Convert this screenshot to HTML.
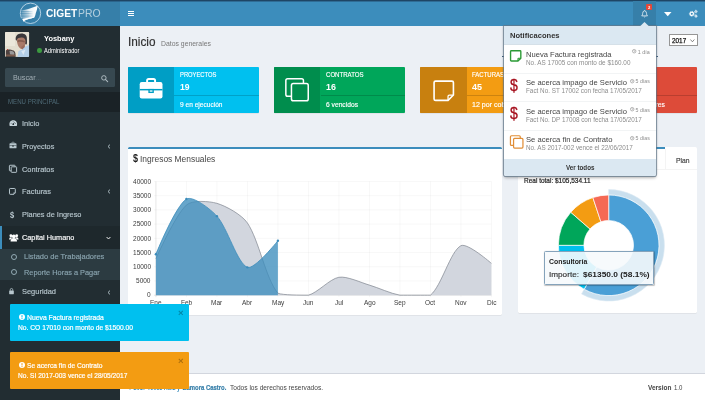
<!DOCTYPE html>
<html><head><meta charset="utf-8"><title>CIGETPRO</title>
<style>
html,body{margin:0;padding:0;}
body{width:705px;height:400px;overflow:hidden;position:relative;background:#ecf0f5;font-family:"Liberation Sans",sans-serif;}
span{display:block}
svg{position:absolute;overflow:visible}
</style></head><body>
<div style="position:absolute;left:0px;top:0px;width:705px;height:26.4px;background:#3c8dbc;"></div>
<div style="position:absolute;left:0px;top:0px;width:120px;height:26.4px;background:#367fa9;"></div>
<div style="position:absolute;left:0px;top:0px;width:705px;height:1px;background:#1e4565;"></div>
<div style="position:absolute;left:0px;top:1px;width:705px;height:0.7px;background:rgba(30,69,101,0.45);"></div>
<div style="position:absolute;left:632.8px;top:1px;width:22.8px;height:25.4px;background:#367fa9;"></div>
<svg style="left:20px;top:3px" width="21" height="21" viewBox="0 0 21 21">
<defs><linearGradient id="lg" x1="0" x2="1" y1="0" y2="0"><stop offset="0" stop-color="#fff" stop-opacity="0.3"/><stop offset="0.5" stop-color="#fff" stop-opacity="0.9"/><stop offset="1" stop-color="#fff" stop-opacity="1"/></linearGradient>
<linearGradient id="lg2" x1="0" x2="1" y1="0" y2="0"><stop offset="0" stop-color="#367fa9" stop-opacity="1"/><stop offset="0.6" stop-color="#367fa9" stop-opacity="0.7"/><stop offset="1" stop-color="#367fa9" stop-opacity="0"/></linearGradient></defs>
<circle cx="10.5" cy="10.3" r="10.2" fill="none" stroke="#cfe3f1" stroke-width="0.8"/>
<path d="M1.5 7.6 C6 6.8 12 5 17.6 2.7 C17.4 5.5 16.6 8 15.8 10 C15.4 12 15 13.5 14.2 14.6 C12 15.4 10 15.6 8 16.2 C6 17 4.5 17.6 3 18.6 C3.2 17.4 3 16.4 2.6 15.6 L1 14.5 Z" fill="url(#lg)"/>
<path d="M0.8 8.7 H13 M0.8 10.4 H13.5 M0.8 12.1 H13.5 M0.8 13.8 H13 M1 15.4 H9" stroke="url(#lg2)" stroke-width="0.7" fill="none"/>
<path d="M3 18.6 C3.2 17.4 3 16.6 2.8 15.8 C6 14.8 11 14.6 14.4 13.8 L14.2 14.6 C12 15.4 10 15.6 8 16.2 C6 17 4.5 17.6 3 18.6 Z" fill="#fff"/>
</svg>
<span style="position:absolute;top:4px;line-height:20px;font-size:10.2px;color:#fff;white-space:nowrap;font-weight:bold;left:46.20px;transform-origin:0 50%;transform:scaleX(1.0010);">CIGET</span>
<span style="position:absolute;top:4px;line-height:20px;font-size:10.2px;color:rgba(255,255,255,0.62);white-space:nowrap;left:77.60px;transform-origin:0 50%;transform:scaleX(1.0225);">PRO</span>
<div style="position:absolute;left:128.2px;top:10.6px;width:6.3px;height:1.1px;background:#fff;"></div>
<div style="position:absolute;left:128.2px;top:12.7px;width:6.3px;height:1.1px;background:#fff;"></div>
<div style="position:absolute;left:128.2px;top:14.8px;width:6.3px;height:1.1px;background:#fff;"></div>
<div style="position:absolute;left:0px;top:26.4px;width:120px;height:373.6px;background:#222d32;"></div>
<svg style="left:4.9px;top:31.9px" width="24.1" height="24.9" viewBox="0 0 24.1 24.9">
<defs><clipPath id="ac"><rect x="0" y="0" width="24.1" height="24.9" rx="1.2"/></clipPath><filter id="bl" x="-10%" y="-10%" width="120%" height="120%"><feGaussianBlur stdDeviation="0.55"/></filter></defs>
<g clip-path="url(#ac)">
<rect width="24.1" height="24.9" fill="#e3decf"/>
<g filter="url(#bl)">
<rect x="-2" y="-2" width="12" height="16" fill="#ebe7da"/>
<rect x="20" y="-2" width="6" height="14" fill="#e6e1d3"/>
<path d="M10.8 8 C10.2 4 12.5 1.6 16.2 1.5 C20 1.4 22.2 3.6 21.9 7 C22 9.5 22.2 11.5 21.6 12.6 L19.5 12 L12.5 9 Z" fill="#3a393b"/>
<path d="M11.8 8 C12.3 6 15 5.4 17 5.6 C19.4 5.8 20.6 7.2 20.6 9.5 C20.6 12.8 19.2 15.8 16.6 17 C14.2 16.4 12.2 13 11.8 8 Z" fill="#a97a68"/>
<path d="M12.4 8.6 C14 7.8 17.5 8 19.8 9 L19.6 10.4 C17.5 9.6 14.5 9.6 12.6 10.2 Z" fill="#7d5648" opacity="0.8"/>
<path d="M16 15 L19.6 12.6 L20 16 L17.6 18.6 Z" fill="#9a6b5a"/>
<path d="M12.3 26 L13.5 19 L17.2 17.4 L20.5 14.6 L24.6 12.8 L25 26 Z" fill="#b3cfe8"/>
<path d="M16.2 19 L18.4 23 L20.6 17.5 L18.2 18.4 Z" fill="#dbe8f4"/>
<path d="M0.8 18.4 C2.5 16.6 6 17.6 8.6 18.6 C10.4 19.6 10.8 22 10.6 26 L0.8 26 Z" fill="#4d433f"/>
<path d="M4.5 19 C6.5 18.2 9 19.4 9.4 21.4 L9 23.4 L5 22.6 Z" fill="#9a9999"/>
<path d="M1 22.5 H10 V24.2 H1 Z" fill="#7a5a4c"/>
<circle cx="2.5" cy="17.6" r="0.7" fill="#c0392b"/>
</g></g></svg>
<span style="position:absolute;top:29px;line-height:20px;font-size:7.4px;color:#fff;white-space:nowrap;font-weight:bold;left:44.00px;transform-origin:0 50%;transform:scaleX(1.0068);">Yosbany</span>
<div style="position:absolute;left:37px;top:48.2px;width:4.6px;height:4.6px;border-radius:50%;background:#3c9a40"></div>
<span style="position:absolute;top:41px;line-height:20px;font-size:6.8px;color:#fff;white-space:nowrap;left:44.00px;transform-origin:0 50%;transform:scaleX(0.8463);">Administrador</span>
<div style="position:absolute;left:5px;top:68px;width:110px;height:19px;background:#374850;border-radius:1.5px"></div>
<span style="position:absolute;top:68px;line-height:20px;font-size:7.4px;color:#a3afb5;white-space:nowrap;left:12.80px;transform-origin:0 50%;transform:scaleX(0.9813);">Buscar</span>
<span style="position:absolute;top:68px;line-height:20px;font-size:7.4px;color:#5c6c74;white-space:nowrap;left:35.80px;transform-origin:0 50%;transform:scaleX(0.8107);">...</span>
<svg style="left:101px;top:74.6px" width="7.4" height="7.4" viewBox="0 0 8 8"><circle cx="3.1" cy="3.1" r="2.4" fill="none" stroke="#b0bcc2" stroke-width="1.05"/><path d="M5 5 L7.2 7.2" stroke="#b0bcc2" stroke-width="1.15" stroke-linecap="round"/></svg>
<div style="position:absolute;left:0px;top:92px;width:120px;height:19.5px;background:#1a2226;"></div>
<span style="position:absolute;top:92px;line-height:20px;font-size:6.5px;color:#4e6a76;white-space:nowrap;left:7.80px;transform-origin:0 50%;transform:scaleX(0.9402);">MENU PRINCIPAL</span>
<div style="position:absolute;left:0px;top:226px;width:120px;height:23.5px;background:#1e282c;"></div>
<div style="position:absolute;left:0px;top:226px;width:2px;height:23.5px;background:#3c8dbc;"></div>
<div style="position:absolute;left:0px;top:249.3px;width:120px;height:31px;background:#2c3b41;"></div>
<span style="position:absolute;top:114px;line-height:20px;font-size:7.8px;color:#b8c7ce;white-space:nowrap;left:21.80px;transform-origin:0 50%;transform:scaleX(0.9501);-webkit-text-stroke:0.15px #b8c7ce;">Inicio</span>
<span style="position:absolute;top:137px;line-height:20px;font-size:7.8px;color:#b8c7ce;white-space:nowrap;left:21.80px;transform-origin:0 50%;transform:scaleX(0.9313);-webkit-text-stroke:0.15px #b8c7ce;">Proyectos</span>
<span style="position:absolute;top:160px;line-height:20px;font-size:7.8px;color:#b8c7ce;white-space:nowrap;left:21.80px;transform-origin:0 50%;transform:scaleX(0.9522);-webkit-text-stroke:0.15px #b8c7ce;">Contratos</span>
<span style="position:absolute;top:182px;line-height:20px;font-size:7.8px;color:#b8c7ce;white-space:nowrap;left:21.80px;transform-origin:0 50%;transform:scaleX(0.9557);-webkit-text-stroke:0.15px #b8c7ce;">Facturas</span>
<span style="position:absolute;top:205px;line-height:20px;font-size:7.8px;color:#b8c7ce;white-space:nowrap;left:21.80px;transform-origin:0 50%;transform:scaleX(0.9463);-webkit-text-stroke:0.15px #b8c7ce;">Planes de Ingreso</span>
<span style="position:absolute;top:282px;line-height:20px;font-size:7.8px;color:#b8c7ce;white-space:nowrap;left:21.80px;transform-origin:0 50%;transform:scaleX(0.9561);-webkit-text-stroke:0.15px #b8c7ce;">Seguridad</span>
<span style="position:absolute;top:228px;line-height:20px;font-size:7.8px;color:#fff;white-space:nowrap;left:21.80px;transform-origin:0 50%;transform:scaleX(0.9369);-webkit-text-stroke:0.15px #fff;">Capital Humano</span>
<span style="position:absolute;top:247px;line-height:20px;font-size:7.8px;color:#8aa4af;white-space:nowrap;left:23.70px;transform-origin:0 50%;transform:scaleX(0.9607);-webkit-text-stroke:0.15px #8aa4af;">Listado de Trabajadores</span>
<span style="position:absolute;top:263px;line-height:20px;font-size:7.8px;color:#8aa4af;white-space:nowrap;left:23.70px;transform-origin:0 50%;transform:scaleX(0.9450);-webkit-text-stroke:0.15px #8aa4af;">Reporte Horas a Pagar</span>
<svg style="left:107px;top:143.7px" width="4" height="5" viewBox="0 0 4 5"><path d="M3 0.6 L1 2.5 L3 4.4" fill="none" stroke="#b8c7ce" stroke-width="0.9"/></svg>
<svg style="left:107px;top:189.2px" width="4" height="5" viewBox="0 0 4 5"><path d="M3 0.6 L1 2.5 L3 4.4" fill="none" stroke="#b8c7ce" stroke-width="0.9"/></svg>
<svg style="left:107px;top:289.5px" width="4" height="5" viewBox="0 0 4 5"><path d="M3 0.6 L1 2.5 L3 4.4" fill="none" stroke="#b8c7ce" stroke-width="0.9"/></svg>
<svg style="left:105.8px;top:236px" width="5" height="4" viewBox="0 0 5 4"><path d="M0.6 1 L2.5 3 L4.4 1" fill="none" stroke="#fff" stroke-width="0.9"/></svg>
<svg style="left:8.8px;top:120.1px" width="8.5" height="6.1" viewBox="0 0 9 6.8"><path d="M0.5 6.6 C-0.6 2.6 1.6 0.2 4.5 0.2 C7.4 0.2 9.6 2.6 8.5 6.6 Z" fill="#c6d3d9"/><circle cx="4.5" cy="4.7" r="0.95" fill="#222d32"/><path d="M4.5 4.7 L5.9 2.5" stroke="#222d32" stroke-width="0.7"/><circle cx="2.1" cy="3.6" r="0.45" fill="#222d32"/><circle cx="4.3" cy="1.8" r="0.45" fill="#222d32"/><circle cx="6.9" cy="3.8" r="0.45" fill="#222d32"/></svg>
<svg style="left:9px;top:142.4px" width="8" height="6.3" viewBox="0 0 20 18">
<path d="M6.5 4 V2.2 Q6.5 0.8 7.9 0.8 H12.1 Q13.5 0.8 13.5 2.2 V4" fill="none" stroke="#b8c7ce" stroke-width="1.7"/>
<rect x="0" y="3.6" width="20" height="14.4" rx="1.8" fill="#b8c7ce"/>
<rect x="0" y="9.6" width="20" height="1.3" fill="#222d32"/>
<rect x="7.6" y="9.6" width="4.8" height="3.6" fill="#222d32"/>
<rect x="8.8" y="10.9" width="2.4" height="1.1" fill="#b8c7ce"/>
</svg>
<svg style="left:9px;top:165px" width="8" height="7.6" viewBox="0 0 24 23.6">
<path d="M6.4 18.2 H2.6 Q0.8 18.2 0.8 16.4 V2.6 Q0.8 0.8 2.6 0.8 H16.6 Q18.4 0.8 18.4 2.6 V5.6" fill="none" stroke="#b8c7ce" stroke-width="3.0"/>
<rect x="6.4" y="5.6" width="16.8" height="17.2" rx="1.8" fill="none" stroke="#b8c7ce" stroke-width="3.0"/>
</svg>
<svg style="left:9px;top:188px" width="6.8" height="6.8" viewBox="0 0 6.8 6.8"><path d="M4.9 6.3 H1.2 Q0.5 6.3 0.5 5.6 V1.2 Q0.5 0.5 1.2 0.5 H5.6 Q6.3 0.5 6.3 1.2 V4.9 Z" fill="none" stroke="#b8c7ce" stroke-width="1"/><path d="M4.7 6.3 V4.7 H6.3" fill="none" stroke="#b8c7ce" stroke-width="0.6"/></svg>
<span style="position:absolute;top:205px;line-height:20px;font-size:8.6px;color:#b8c7ce;white-space:nowrap;font-weight:bold;left:9.50px;transform-origin:0 50%;transform:scaleX(0.8781);">$</span>
<svg style="left:8.6px;top:233.6px" width="9.6" height="7.6" viewBox="0 0 20 16"><circle cx="10" cy="5" r="4.2" fill="#fff"/><path d="M3.2 16 Q3.2 8.6 10 8.6 Q16.8 8.6 16.8 16 Z" fill="#fff"/><circle cx="3.9" cy="3.6" r="3" fill="#fff"/><circle cx="16.1" cy="3.6" r="3" fill="#fff"/><path d="M0 11.6 Q0 6.4 4.4 6.6 L7 8.4 Q4 10 3.6 11.6 Z" fill="#fff"/><path d="M20 11.6 Q20 6.4 15.6 6.6 L13 8.4 Q16 10 16.4 11.6 Z" fill="#fff"/></svg>
<svg style="left:9.1px;top:288.3px" width="5" height="6.2" viewBox="0 0 12 16"><path d="M2.8 7 V4.6 Q2.8 1.2 6 1.2 Q9.2 1.2 9.2 4.6 V7" fill="none" stroke="#b8c7ce" stroke-width="2"/><rect x="0" y="6.6" width="12" height="9.4" rx="1.2" fill="#b8c7ce"/></svg>
<div style="position:absolute;left:10.9px;top:253.9px;width:4.2px;height:4.2px;border:1px solid #93abb5;border-radius:50%"></div>
<div style="position:absolute;left:10.9px;top:268.9px;width:4.2px;height:4.2px;border:1px solid #93abb5;border-radius:50%"></div>
<span style="position:absolute;top:32px;line-height:20px;font-size:12.6px;color:#333;white-space:nowrap;left:128.30px;transform-origin:0 50%;transform:scaleX(0.9349);-webkit-text-stroke:0.2px #333;">Inicio</span>
<span style="position:absolute;top:34px;line-height:20px;font-size:7.6px;color:#777;white-space:nowrap;left:161.00px;transform-origin:0 50%;transform:scaleX(0.9034);">Datos generales</span>
<div style="position:absolute;left:669.1px;top:34.4px;width:27.2px;height:9.8px;background:#fff;border:0.8px solid #959595;border-radius:0.5px"></div>
<span style="position:absolute;top:31px;line-height:20px;font-size:6.9px;color:#111;white-space:nowrap;left:671.80px;transform-origin:0 50%;transform:scaleX(0.9251);-webkit-text-stroke:0.25px #111;">2017</span>
<svg style="left:690.4px;top:38.8px" width="4.8" height="3.4" viewBox="0 0 4.8 3.4"><path d="M0.4 0.5 L2.4 2.8 L4.4 0.5" fill="none" stroke="#555" stroke-width="0.7"/></svg>
<div style="position:absolute;left:128px;top:66.6px;width:130.7px;height:46.6px;background:#00c0ef;border-radius:1px;box-shadow:0 0.5px 0.5px rgba(0,0,0,0.1)"></div>
<div style="position:absolute;left:128px;top:66.6px;width:46.3px;height:46.6px;background:#009ec5;border-radius:1px 0 0 1px"></div>
<div style="position:absolute;left:174.3px;top:94.9px;width:84.4px;height:0.7px;background:rgba(0,0,0,0.16);"></div>
<span style="position:absolute;top:65px;line-height:20px;font-size:7.3px;color:#fff;white-space:nowrap;left:179.80px;transform-origin:0 50%;transform:scaleX(0.7964);-webkit-text-stroke:0.15px #fff;">PROYECTOS</span>
<span style="position:absolute;top:77px;line-height:20px;font-size:9.2px;color:#fff;white-space:nowrap;font-weight:bold;left:179.80px;transform-origin:0 50%;transform:scaleX(0.9381);">19</span>
<span style="position:absolute;top:95px;line-height:20px;font-size:7.3px;color:#fff;white-space:nowrap;left:179.80px;transform-origin:0 50%;transform:scaleX(0.9027);-webkit-text-stroke:0.15px #fff;">9 en ejecución</span>
<div style="position:absolute;left:274.2px;top:66.6px;width:130.7px;height:46.6px;background:#00a65a;border-radius:1px;box-shadow:0 0.5px 0.5px rgba(0,0,0,0.1)"></div>
<div style="position:absolute;left:274.2px;top:66.6px;width:46.3px;height:46.6px;background:#008d4d;border-radius:1px 0 0 1px"></div>
<div style="position:absolute;left:320.5px;top:94.9px;width:84.4px;height:0.7px;background:rgba(0,0,0,0.16);"></div>
<span style="position:absolute;top:65px;line-height:20px;font-size:7.3px;color:#fff;white-space:nowrap;left:326.00px;transform-origin:0 50%;transform:scaleX(0.8327);-webkit-text-stroke:0.15px #fff;">CONTRATOS</span>
<span style="position:absolute;top:77px;line-height:20px;font-size:9.2px;color:#fff;white-space:nowrap;font-weight:bold;left:326.00px;transform-origin:0 50%;transform:scaleX(0.9674);">16</span>
<span style="position:absolute;top:95px;line-height:20px;font-size:7.3px;color:#fff;white-space:nowrap;left:326.00px;transform-origin:0 50%;transform:scaleX(0.9169);-webkit-text-stroke:0.15px #fff;">6 vencidos</span>
<div style="position:absolute;left:420.4px;top:66.6px;width:130.7px;height:46.6px;background:#f39c12;border-radius:1px;box-shadow:0 0.5px 0.5px rgba(0,0,0,0.1)"></div>
<div style="position:absolute;left:420.4px;top:66.6px;width:46.3px;height:46.6px;background:#c8800f;border-radius:1px 0 0 1px"></div>
<div style="position:absolute;left:466.7px;top:94.9px;width:84.4px;height:0.7px;background:rgba(0,0,0,0.16);"></div>
<span style="position:absolute;top:65px;line-height:20px;font-size:7.3px;color:#fff;white-space:nowrap;left:472.20px;transform-origin:0 50%;transform:scaleX(0.8218);-webkit-text-stroke:0.15px #fff;">FACTURAS</span>
<span style="position:absolute;top:77px;line-height:20px;font-size:9.2px;color:#fff;white-space:nowrap;font-weight:bold;left:472.20px;transform-origin:0 50%;transform:scaleX(0.9772);">45</span>
<span style="position:absolute;top:95px;line-height:20px;font-size:7.3px;color:#fff;white-space:nowrap;left:472.20px;transform-origin:0 50%;transform:scaleX(0.9673);-webkit-text-stroke:0.15px #fff;">12 por cobrar</span>
<div style="position:absolute;left:566.6px;top:66.6px;width:130.7px;height:46.6px;background:#dd4b39;border-radius:1px;box-shadow:0 0.5px 0.5px rgba(0,0,0,0.1)"></div>
<div style="position:absolute;left:566.6px;top:66.6px;width:46.3px;height:46.6px;background:#b73e2f;border-radius:1px 0 0 1px"></div>
<div style="position:absolute;left:612.9px;top:94.9px;width:84.4px;height:0.7px;background:rgba(0,0,0,0.16);"></div>
<span style="position:absolute;top:65px;line-height:20px;font-size:7.3px;color:#fff;white-space:nowrap;left:618.40px;transform-origin:0 50%;transform:scaleX(0.8475);-webkit-text-stroke:0.15px #fff;">HORAS</span>
<span style="position:absolute;top:77px;line-height:20px;font-size:9.2px;color:#fff;white-space:nowrap;font-weight:bold;left:618.40px;transform-origin:0 50%;transform:scaleX(0.9772);">28</span>
<span style="position:absolute;top:95px;line-height:20px;font-size:7.3px;color:#fff;white-space:nowrap;left:618.40px;transform-origin:0 50%;transform:scaleX(0.9265);-webkit-text-stroke:0.15px #fff;">12 trabajadores</span>
<svg style="left:139px;top:78.1px" width="24.2" height="20.5" viewBox="0 0 20 18">
<path d="M6.5 4 V2.2 Q6.5 0.8 7.9 0.8 H12.1 Q13.5 0.8 13.5 2.2 V4" fill="none" stroke="#fff" stroke-width="1.7"/>
<rect x="0" y="3.6" width="20" height="14.4" rx="1.8" fill="#fff"/>
<rect x="0" y="9.6" width="20" height="1.3" fill="#009ec5"/>
<rect x="7.6" y="9.6" width="4.8" height="3.6" fill="#009ec5"/>
<rect x="8.8" y="10.9" width="2.4" height="1.1" fill="#fff"/>
</svg>
<svg style="left:285.3px;top:77.9px" width="24.1" height="23.6" viewBox="0 0 24 23.6">
<path d="M6.4 18.2 H2.6 Q0.8 18.2 0.8 16.4 V2.6 Q0.8 0.8 2.6 0.8 H16.6 Q18.4 0.8 18.4 2.6 V5.6" fill="none" stroke="#fff" stroke-width="1.5"/>
<rect x="6.4" y="5.6" width="16.8" height="17.2" rx="1.8" fill="none" stroke="#fff" stroke-width="1.5"/>
</svg>
<svg style="left:433px;top:79.5px" width="21.5" height="21.5" viewBox="0 0 20 20">
<path d="M14 19 H2.4 Q1 19 1 17.6 V2.4 Q1 1 2.4 1 H17.6 Q19 1 19 2.4 V14 Z" fill="none" stroke="#fff" stroke-width="1.5" stroke-linejoin="round"/>
<path d="M14 19 V15.2 Q14 14 15.2 14 H19" fill="none" stroke="#fff" stroke-width="1.2000000000000002"/>
</svg>
<div style="position:absolute;left:128px;top:147px;width:374.3px;height:168px;background:#fff;border-radius:1.5px;box-shadow:0 0.5px 0.5px rgba(0,0,0,0.1)"></div>
<div style="position:absolute;left:128px;top:147px;width:374.3px;height:1.5px;background:#3c8dbc;border-radius:1.5px 1.5px 0 0"></div>
<span style="position:absolute;top:149px;line-height:20px;font-size:10.2px;color:#222;white-space:nowrap;font-weight:bold;left:133.00px;transform-origin:0 50%;transform:scaleX(0.8814);">$</span>
<span style="position:absolute;top:149px;line-height:20px;font-size:9.4px;color:#444;white-space:nowrap;left:140.00px;transform-origin:0 50%;transform:scaleX(0.8975);">Ingresos Mensuales</span>
<svg style="left:0;top:0" width="705" height="400" viewBox="0 0 705 400">
<line x1="153.9" x2="491.4" y1="295.20" y2="295.20" stroke="rgba(0,0,0,0.06)" stroke-width="0.6"/>
<line x1="153.9" x2="491.4" y1="280.98" y2="280.98" stroke="rgba(0,0,0,0.06)" stroke-width="0.6"/>
<line x1="153.9" x2="491.4" y1="266.76" y2="266.76" stroke="rgba(0,0,0,0.06)" stroke-width="0.6"/>
<line x1="153.9" x2="491.4" y1="252.54" y2="252.54" stroke="rgba(0,0,0,0.06)" stroke-width="0.6"/>
<line x1="153.9" x2="491.4" y1="238.32" y2="238.32" stroke="rgba(0,0,0,0.06)" stroke-width="0.6"/>
<line x1="153.9" x2="491.4" y1="224.10" y2="224.10" stroke="rgba(0,0,0,0.06)" stroke-width="0.6"/>
<line x1="153.9" x2="491.4" y1="209.88" y2="209.88" stroke="rgba(0,0,0,0.06)" stroke-width="0.6"/>
<line x1="153.9" x2="491.4" y1="195.66" y2="195.66" stroke="rgba(0,0,0,0.06)" stroke-width="0.6"/>
<line x1="153.9" x2="491.4" y1="181.44" y2="181.44" stroke="rgba(0,0,0,0.06)" stroke-width="0.6"/>
<line x1="155.90" x2="155.90" y1="181.44" y2="297.2" stroke="rgba(0,0,0,0.06)" stroke-width="0.6"/>
<line x1="186.40" x2="186.40" y1="181.44" y2="297.2" stroke="rgba(0,0,0,0.06)" stroke-width="0.6"/>
<line x1="216.90" x2="216.90" y1="181.44" y2="297.2" stroke="rgba(0,0,0,0.06)" stroke-width="0.6"/>
<line x1="247.40" x2="247.40" y1="181.44" y2="297.2" stroke="rgba(0,0,0,0.06)" stroke-width="0.6"/>
<line x1="277.90" x2="277.90" y1="181.44" y2="297.2" stroke="rgba(0,0,0,0.06)" stroke-width="0.6"/>
<line x1="308.40" x2="308.40" y1="181.44" y2="297.2" stroke="rgba(0,0,0,0.06)" stroke-width="0.6"/>
<line x1="338.90" x2="338.90" y1="181.44" y2="297.2" stroke="rgba(0,0,0,0.06)" stroke-width="0.6"/>
<line x1="369.40" x2="369.40" y1="181.44" y2="297.2" stroke="rgba(0,0,0,0.06)" stroke-width="0.6"/>
<line x1="399.90" x2="399.90" y1="181.44" y2="297.2" stroke="rgba(0,0,0,0.06)" stroke-width="0.6"/>
<line x1="430.40" x2="430.40" y1="181.44" y2="297.2" stroke="rgba(0,0,0,0.06)" stroke-width="0.6"/>
<line x1="460.90" x2="460.90" y1="181.44" y2="297.2" stroke="rgba(0,0,0,0.06)" stroke-width="0.6"/>
<line x1="491.40" x2="491.40" y1="181.44" y2="297.2" stroke="rgba(0,0,0,0.06)" stroke-width="0.6"/>
<line x1="155.9" x2="155.9" y1="181.44" y2="297.2" stroke="rgba(0,0,0,0.12)" stroke-width="0.6"/>
<line x1="153.9" x2="491.4" y1="295.2" y2="295.2" stroke="rgba(0,0,0,0.12)" stroke-width="0.6"/>
<path d="M155.90 258.80 C155.90 258.80 174.97 215.44 186.40 205.05 C192.05 199.91 209.09 201.05 216.90 203.34 C226.17 206.06 241.91 214.88 247.40 222.96 C258.99 240.04 265.69 278.75 277.90 293.21 C282.77 295.20 300.48 295.20 308.40 295.20 C317.56 292.81 329.86 278.78 338.90 277.28 C346.94 275.95 360.95 282.62 369.40 285.10 C378.03 287.64 391.14 293.75 399.90 295.20 C408.22 295.20 424.52 295.20 430.40 295.20 C441.60 286.11 450.27 251.27 460.90 245.71 C467.35 242.35 491.40 263.35 491.40 263.35 L491.40 295.2 L155.9 295.2 Z" fill="#d2d6de"/>
<path d="M155.90 258.80 C155.90 258.80 174.97 215.44 186.40 205.05 C192.05 199.91 209.09 201.05 216.90 203.34 C226.17 206.06 241.91 214.88 247.40 222.96 C258.99 240.04 265.69 278.75 277.90 293.21 C282.77 295.20 300.48 295.20 308.40 295.20 C317.56 292.81 329.86 278.78 338.90 277.28 C346.94 275.95 360.95 282.62 369.40 285.10 C378.03 287.64 391.14 293.75 399.90 295.20 C408.22 295.20 424.52 295.20 430.40 295.20 C441.60 286.11 450.27 251.27 460.90 245.71 C467.35 242.35 491.40 263.35 491.40 263.35" fill="none" stroke="#7f858f" stroke-width="0.7"/>
<path d="M155.90 254.25 C155.90 254.25 175.41 205.94 186.40 199.07 C192.49 195.27 210.59 209.07 216.90 216.14 C227.67 228.18 237.23 263.23 247.40 267.33 C254.31 270.11 277.90 240.74 277.90 240.74 L277.90 295.2 L155.9 295.2 Z" fill="rgba(60,141,188,0.78)"/>
<path d="M155.90 254.25 C155.90 254.25 175.41 205.94 186.40 199.07 C192.49 195.27 210.59 209.07 216.90 216.14 C227.67 228.18 237.23 263.23 247.40 267.33 C254.31 270.11 277.90 240.74 277.90 240.74" fill="none" stroke="#3b8bba" stroke-width="0.8"/>
<circle cx="155.90" cy="254.25" r="1.2" fill="#3b8bba"/>
<circle cx="186.40" cy="199.07" r="1.2" fill="#3b8bba"/>
<circle cx="216.90" cy="216.14" r="1.2" fill="#3b8bba"/>
<circle cx="247.40" cy="267.33" r="1.2" fill="#3b8bba"/>
<circle cx="277.90" cy="240.74" r="1.2" fill="#3b8bba"/>
</svg>
<span style="position:absolute;top:285px;line-height:20px;font-size:6.5px;color:#3a3a3a;white-space:nowrap;right:554.20px;transform-origin:100% 50%;transform:scaleX(0.9990);">0</span>
<span style="position:absolute;top:271px;line-height:20px;font-size:6.5px;color:#3a3a3a;white-space:nowrap;right:554.20px;transform-origin:100% 50%;transform:scaleX(0.9990);">5000</span>
<span style="position:absolute;top:257px;line-height:20px;font-size:6.5px;color:#3a3a3a;white-space:nowrap;right:554.20px;transform-origin:100% 50%;transform:scaleX(0.9990);">10000</span>
<span style="position:absolute;top:243px;line-height:20px;font-size:6.5px;color:#3a3a3a;white-space:nowrap;right:554.20px;transform-origin:100% 50%;transform:scaleX(0.9990);">15000</span>
<span style="position:absolute;top:229px;line-height:20px;font-size:6.5px;color:#3a3a3a;white-space:nowrap;right:554.20px;transform-origin:100% 50%;transform:scaleX(0.9990);">20000</span>
<span style="position:absolute;top:214px;line-height:20px;font-size:6.5px;color:#3a3a3a;white-space:nowrap;right:554.20px;transform-origin:100% 50%;transform:scaleX(0.9990);">25000</span>
<span style="position:absolute;top:200px;line-height:20px;font-size:6.5px;color:#3a3a3a;white-space:nowrap;right:554.20px;transform-origin:100% 50%;transform:scaleX(0.9990);">30000</span>
<span style="position:absolute;top:186px;line-height:20px;font-size:6.5px;color:#3a3a3a;white-space:nowrap;right:554.20px;transform-origin:100% 50%;transform:scaleX(0.9990);">35000</span>
<span style="position:absolute;top:172px;line-height:20px;font-size:6.5px;color:#3a3a3a;white-space:nowrap;right:554.20px;transform-origin:100% 50%;transform:scaleX(0.9990);">40000</span>
<span style="position:absolute;top:293px;line-height:20px;font-size:6.5px;color:#3a3a3a;white-space:nowrap;left:150.12px;transform-origin:0 50%;transform:scaleX(0.9990);">Ene</span>
<span style="position:absolute;top:293px;line-height:20px;font-size:6.5px;color:#3a3a3a;white-space:nowrap;left:180.80px;transform-origin:0 50%;transform:scaleX(0.9990);">Feb</span>
<span style="position:absolute;top:293px;line-height:20px;font-size:6.5px;color:#3a3a3a;white-space:nowrap;left:211.30px;transform-origin:0 50%;transform:scaleX(0.9990);">Mar</span>
<span style="position:absolute;top:293px;line-height:20px;font-size:6.5px;color:#3a3a3a;white-space:nowrap;left:242.34px;transform-origin:0 50%;transform:scaleX(0.9990);">Abr</span>
<span style="position:absolute;top:293px;line-height:20px;font-size:6.5px;color:#3a3a3a;white-space:nowrap;left:271.76px;transform-origin:0 50%;transform:scaleX(0.9990);">May</span>
<span style="position:absolute;top:293px;line-height:20px;font-size:6.5px;color:#3a3a3a;white-space:nowrap;left:303.16px;transform-origin:0 50%;transform:scaleX(0.9990);">Jun</span>
<span style="position:absolute;top:293px;line-height:20px;font-size:6.5px;color:#3a3a3a;white-space:nowrap;left:334.75px;transform-origin:0 50%;transform:scaleX(0.9990);">Jul</span>
<span style="position:absolute;top:293px;line-height:20px;font-size:6.5px;color:#3a3a3a;white-space:nowrap;left:363.62px;transform-origin:0 50%;transform:scaleX(0.9990);">Ago</span>
<span style="position:absolute;top:293px;line-height:20px;font-size:6.5px;color:#3a3a3a;white-space:nowrap;left:394.12px;transform-origin:0 50%;transform:scaleX(0.9990);">Sep</span>
<span style="position:absolute;top:293px;line-height:20px;font-size:6.5px;color:#3a3a3a;white-space:nowrap;left:425.34px;transform-origin:0 50%;transform:scaleX(0.9990);">Oct</span>
<span style="position:absolute;top:293px;line-height:20px;font-size:6.5px;color:#3a3a3a;white-space:nowrap;left:455.12px;transform-origin:0 50%;transform:scaleX(0.9990);">Nov</span>
<span style="position:absolute;top:293px;line-height:20px;font-size:6.5px;color:#3a3a3a;white-space:nowrap;left:486.71px;transform-origin:0 50%;transform:scaleX(0.9990);">Dic</span>
<div style="position:absolute;left:517.7px;top:147px;width:179.8px;height:166.3px;background:#fff;border-radius:1.5px;box-shadow:0 0.5px 0.5px rgba(0,0,0,0.1)"></div>
<div style="position:absolute;left:517.7px;top:147px;width:147.1px;height:1.5px;background:#3c8dbc;border-radius:1.5px 0 0 0"></div>
<div style="position:absolute;left:517.7px;top:169.3px;width:179.8px;height:0.6px;background:#f4f4f4;"></div>
<div style="position:absolute;left:664.5px;top:148.5px;width:0.6px;height:21px;background:#f4f4f4;"></div>
<span style="position:absolute;top:151px;line-height:20px;font-size:7.4px;color:#3a3a3a;white-space:nowrap;left:676.00px;transform-origin:0 50%;transform:scaleX(0.9182);-webkit-text-stroke:0.15px #3a3a3a;">Plan</span>
<span style="position:absolute;top:171px;line-height:20px;font-size:6.8px;color:#222;white-space:nowrap;left:523.70px;transform-origin:0 50%;transform:scaleX(0.9539);-webkit-text-stroke:0.2px #222;">Real total: $105,534.11</span>
<svg style="left:0;top:0" width="705" height="400" viewBox="0 0 705 400">
<path d="M608.70 189.60 A55.7 55.7 0 1 1 581.56 293.94 L584.19 289.23 A50.3 50.3 0 1 0 608.70 195.00 Z" fill="#c9dfee" stroke="#dce9f3" stroke-width="0.6"/>
<path d="M608.70 195.00 A50.3 50.3 0 1 1 584.19 289.23 L596.62 266.96 A24.8 24.8 0 1 0 608.70 220.50 Z" fill="#4a9fd6" stroke="#fff" stroke-width="0.7"/>
<path d="M584.19 289.23 A50.3 50.3 0 0 1 558.40 245.30 L583.90 245.30 A24.8 24.8 0 0 0 596.62 266.96 Z" fill="#00c0ef" stroke="#fff" stroke-width="0.7"/>
<path d="M558.40 245.30 A50.3 50.3 0 0 1 570.76 212.27 L589.99 229.02 A24.8 24.8 0 0 0 583.90 245.30 Z" fill="#00a65a" stroke="#fff" stroke-width="0.7"/>
<path d="M570.76 212.27 A50.3 50.3 0 0 1 592.86 197.56 L600.89 221.76 A24.8 24.8 0 0 0 589.99 229.02 Z" fill="#f39c12" stroke="#fff" stroke-width="0.7"/>
<path d="M592.86 197.56 A50.3 50.3 0 0 1 608.70 195.00 L608.70 220.50 A24.8 24.8 0 0 0 600.89 221.76 Z" fill="#f56954" stroke="#fff" stroke-width="0.7"/>
</svg>
<div style="position:absolute;left:543.8px;top:251px;width:109.8px;height:34px;background:rgba(246,249,252,0.9);border:0.9px solid #85a3bb;border-radius:1.5px;box-sizing:border-box;box-shadow:0.3px 0.6px 1px rgba(0,0,0,0.25)"></div>
<span style="position:absolute;top:252px;line-height:20px;font-size:7px;color:#222;white-space:nowrap;font-weight:bold;left:548.80px;transform-origin:0 50%;transform:scaleX(0.9848);">Consultoría</span>
<span style="position:absolute;top:265px;line-height:20px;font-size:7.6px;color:#333;white-space:nowrap;left:548.80px;transform-origin:0 50%;transform:scaleX(1.0762);-webkit-text-stroke:0.15px #333;">Importe:</span>
<span style="position:absolute;top:265px;line-height:20px;font-size:7.6px;color:#222;white-space:nowrap;font-weight:bold;left:582.50px;transform-origin:0 50%;transform:scaleX(1.1039);">$61350.0 (58.1%)</span>
<div style="position:absolute;left:120px;top:373px;width:585px;height:27px;background:#fff;border-top:0.6px solid #d2d6de"></div>
<span style="position:absolute;top:378px;line-height:20px;font-size:7px;color:#3c8dbc;white-space:nowrap;font-weight:bold;left:128.00px;transform-origin:0 50%;transform:scaleX(0.7866);">© 2017 Tellez Ruiz y</span>
<span style="position:absolute;top:378px;line-height:20px;font-size:7px;color:#367fa9;white-space:nowrap;font-weight:bold;right:478.30px;transform-origin:100% 50%;transform:scaleX(0.8472);-webkit-text-stroke:0.2px #367fa9;">Zamora Castro.</span>
<span style="position:absolute;top:378px;line-height:20px;font-size:7px;color:#444;white-space:nowrap;left:230.20px;transform-origin:0 50%;transform:scaleX(0.9410);">Todos los derechos reservados.</span>
<span style="position:absolute;top:378px;line-height:20px;font-size:6.6px;color:#444;white-space:nowrap;font-weight:bold;left:647.80px;transform-origin:0 50%;transform:scaleX(0.9855);">Version</span>
<span style="position:absolute;top:378px;line-height:20px;font-size:6.8px;color:#444;white-space:nowrap;left:674.00px;transform-origin:0 50%;transform:scaleX(0.8886);">1.0</span>
<svg style="left:640.9px;top:9.8px" width="7.2" height="7.6" viewBox="0 0 14 16"><path d="M7 1.6 Q2.9 2.2 2.9 7.2 Q2.9 10.6 1 12.4 H13 Q11.1 10.6 11.1 7.2 Q11.1 2.2 7 1.6 Z" fill="none" stroke="#fff" stroke-width="1.5" stroke-linejoin="round"/><path d="M5.4 13.6 Q7 16 8.6 13.6" fill="none" stroke="#fff" stroke-width="1.3"/><path d="M7 0.3 V1.6" stroke="#fff" stroke-width="1.4"/></svg>
<div style="position:absolute;left:646.2px;top:4px;width:5.5px;height:5.7px;background:#e4483a;border-radius:1px"></div>
<span style="position:absolute;top:-2px;line-height:20px;font-size:4.2px;color:#fff;white-space:nowrap;font-weight:bold;left:647.90px;transform-origin:0 50%;transform:scaleX(0.9990);">2</span>
<svg style="left:663.8px;top:11.6px" width="7.5" height="4.3" viewBox="0 0 7.5 4.3"><path d="M0 0 H7.5 L3.75 4.3 Z" fill="#fff"/></svg>
<svg style="left:689px;top:9.8px" width="9" height="7.6" viewBox="0 0 18 15.2">
<circle cx="5.6" cy="7.6" r="3.3" fill="none" stroke="#fff" stroke-width="2.4"/>
<circle cx="5.6" cy="7.6" r="4.9" fill="none" stroke="#fff" stroke-width="1.5" stroke-dasharray="1.9 1.95"/>
<circle cx="13.8" cy="3.1" r="1.7" fill="none" stroke="#fff" stroke-width="1.8"/>
<circle cx="13.8" cy="3.1" r="2.9" fill="none" stroke="#fff" stroke-width="1.1" stroke-dasharray="1.3 1.4"/>
<circle cx="13.8" cy="12.1" r="1.7" fill="none" stroke="#fff" stroke-width="1.8"/>
<circle cx="13.8" cy="12.1" r="2.9" fill="none" stroke="#fff" stroke-width="1.1" stroke-dasharray="1.3 1.4"/>
</svg>
<div style="position:absolute;left:501.8px;top:55.9px;width:3px;height:0.7px;background:#3f5d7a;"></div>
<div style="position:absolute;left:655.5px;top:55.9px;width:2.2px;height:0.7px;background:#3f5d7a;"></div>
<div style="position:absolute;left:504px;top:26.4px;width:152px;height:150px;background:#fff;border-radius:0 0 2px 2px;box-shadow:0 0 0 1.1px rgba(100,120,138,0.72),0 1.5px 3px rgba(0,0,0,0.3)"></div>
<div style="position:absolute;left:504px;top:26.4px;width:152px;height:17.9px;background:#dbe8f2;border-bottom:0.6px solid #d5e0e8"></div>
<svg style="left:639.4px;top:21.6px" width="11" height="5.2" viewBox="0 0 11 5.2"><path d="M0 5.2 L5.5 0 L11 5.2 Z" fill="#dbe8f2"/></svg>
<span style="position:absolute;top:26px;line-height:20px;font-size:7.3px;color:#333;white-space:nowrap;font-weight:bold;left:510.30px;transform-origin:0 50%;transform:scaleX(1.0362);">Notificacones</span>
<div style="position:absolute;left:504px;top:72.69999999999999px;width:152px;height:0.6px;background:#f2f4f5;"></div>
<div style="position:absolute;left:504px;top:101.1px;width:152px;height:0.6px;background:#f2f4f5;"></div>
<div style="position:absolute;left:504px;top:129.5px;width:152px;height:0.6px;background:#f2f4f5;"></div>
<div style="position:absolute;left:504px;top:159.3px;width:152px;height:17.1px;background:#dbe8f2;border-radius:0 0 2px 2px"></div>
<span style="position:absolute;top:158px;line-height:20px;font-size:6.3px;color:#333;white-space:nowrap;font-weight:bold;left:566.00px;transform-origin:0 50%;transform:scaleX(0.9928);">Ver todos</span>
<span style="position:absolute;top:45px;line-height:20px;font-size:7.9px;color:#444;white-space:nowrap;left:525.80px;transform-origin:0 50%;transform:scaleX(0.9603);">Nueva Factura registrada</span>
<span style="position:absolute;top:53px;line-height:20px;font-size:6.4px;color:#8c8c8c;white-space:nowrap;left:525.80px;transform-origin:0 50%;transform:scaleX(0.9965);">No. AS 17005 con monto de $160.00</span>
<span style="position:absolute;top:42px;line-height:20px;font-size:6.2px;color:#8c8c8c;white-space:nowrap;right:55.00px;transform-origin:100% 50%;transform:scaleX(0.8702);">1 día</span>
<svg style="left:632.00px;top:49.40px" width="4.4" height="4.4" viewBox="0 0 8 8"><circle cx="4" cy="4" r="3.2" fill="none" stroke="#999" stroke-width="1.3"/><path d="M4 2 V4.3 H5.6" fill="none" stroke="#999" stroke-width="1"/></svg>
<span style="position:absolute;top:73px;line-height:20px;font-size:7.9px;color:#444;white-space:nowrap;left:525.80px;transform-origin:0 50%;transform:scaleX(0.9624);">Se acerca impago de Servicio</span>
<span style="position:absolute;top:81px;line-height:20px;font-size:6.4px;color:#8c8c8c;white-space:nowrap;left:525.80px;transform-origin:0 50%;transform:scaleX(0.9920);">Fact No. ST 17002 con fecha 17/05/2017</span>
<span style="position:absolute;top:71px;line-height:20px;font-size:6.2px;color:#8c8c8c;white-space:nowrap;right:55.00px;transform-origin:100% 50%;transform:scaleX(0.8467);">5 días</span>
<svg style="left:629.70px;top:79.00px" width="4.4" height="4.4" viewBox="0 0 8 8"><circle cx="4" cy="4" r="3.2" fill="none" stroke="#999" stroke-width="1.3"/><path d="M4 2 V4.3 H5.6" fill="none" stroke="#999" stroke-width="1"/></svg>
<span style="position:absolute;top:102px;line-height:20px;font-size:7.9px;color:#444;white-space:nowrap;left:525.80px;transform-origin:0 50%;transform:scaleX(0.9624);">Se acerca impago de Servicio</span>
<span style="position:absolute;top:110px;line-height:20px;font-size:6.4px;color:#8c8c8c;white-space:nowrap;left:525.80px;transform-origin:0 50%;transform:scaleX(0.9859);">Fact No. DP 17008 con fecha 17/05/2017</span>
<span style="position:absolute;top:100px;line-height:20px;font-size:6.2px;color:#8c8c8c;white-space:nowrap;right:55.00px;transform-origin:100% 50%;transform:scaleX(0.8467);">5 días</span>
<svg style="left:629.70px;top:107.40px" width="4.4" height="4.4" viewBox="0 0 8 8"><circle cx="4" cy="4" r="3.2" fill="none" stroke="#999" stroke-width="1.3"/><path d="M4 2 V4.3 H5.6" fill="none" stroke="#999" stroke-width="1"/></svg>
<span style="position:absolute;top:130px;line-height:20px;font-size:7.9px;color:#444;white-space:nowrap;left:525.80px;transform-origin:0 50%;transform:scaleX(0.9656);">Se acerca fin de Contrato</span>
<span style="position:absolute;top:138px;line-height:20px;font-size:6.4px;color:#8c8c8c;white-space:nowrap;left:525.80px;transform-origin:0 50%;transform:scaleX(0.9892);">No. AS 2017-002 vence el 22/06/2017</span>
<span style="position:absolute;top:128px;line-height:20px;font-size:6.2px;color:#8c8c8c;white-space:nowrap;right:55.00px;transform-origin:100% 50%;transform:scaleX(0.8467);">5 días</span>
<svg style="left:629.70px;top:135.80px" width="4.4" height="4.4" viewBox="0 0 8 8"><circle cx="4" cy="4" r="3.2" fill="none" stroke="#999" stroke-width="1.3"/><path d="M4 2 V4.3 H5.6" fill="none" stroke="#999" stroke-width="1"/></svg>
<svg style="left:510.4px;top:49.9px" width="11.4" height="11.8" viewBox="0 0 20 20">
<path d="M14 19 H2.4 Q1 19 1 17.6 V2.4 Q1 1 2.4 1 H17.6 Q19 1 19 2.4 V14 Z" fill="none" stroke="#2a9a35" stroke-width="2.4" stroke-linejoin="round"/>
<path d="M14 19 V15.2 Q14 14 15.2 14 H19" fill="none" stroke="#2a9a35" stroke-width="1.92"/>
</svg>
<span style="position:absolute;top:71px;line-height:30px;font-size:16px;color:#a50f1d;white-space:nowrap;left:510.30px;transform-origin:0 50%;transform:scaleX(0.8766);-webkit-text-stroke:0.32px #a50f1d;">$</span>
<span style="position:absolute;top:99px;line-height:30px;font-size:16px;color:#a50f1d;white-space:nowrap;left:510.30px;transform-origin:0 50%;transform:scaleX(0.8766);-webkit-text-stroke:0.32px #a50f1d;">$</span>
<svg style="left:510.2px;top:134.6px" width="13.4" height="13.8" viewBox="0 0 24 23.6">
<path d="M6.4 18.2 H2.6 Q0.8 18.2 0.8 16.4 V2.6 Q0.8 0.8 2.6 0.8 H16.6 Q18.4 0.8 18.4 2.6 V5.6" fill="none" stroke="#e08e37" stroke-width="2.2"/>
<rect x="6.4" y="5.6" width="16.8" height="17.2" rx="1.8" fill="none" stroke="#e08e37" stroke-width="2.2"/>
</svg>
<div style="position:absolute;left:10px;top:303.6px;width:179px;height:37px;background:#00c0ef;border-radius:1px"></div>
<svg style="left:18.6px;top:314.20000000000005px" width="6" height="6" viewBox="0 0 12 12"><circle cx="6" cy="6" r="6" fill="#fff"/><rect x="5" y="2.2" width="2" height="4.6" fill="#00c0ef"/><rect x="5" y="7.8" width="2" height="2" fill="#00c0ef"/></svg>
<span style="position:absolute;top:308px;line-height:20px;font-size:7.2px;color:#fff;white-space:nowrap;left:27.00px;transform-origin:0 50%;transform:scaleX(0.9478);-webkit-text-stroke:0.2px #fff;">Nueva Factura registrada</span>
<span style="position:absolute;top:318px;line-height:20px;font-size:7px;color:#fff;white-space:nowrap;left:18.40px;transform-origin:0 50%;transform:scaleX(0.9563);-webkit-text-stroke:0.2px #fff;">No. CO 17010 con monto de $1500.00</span>
<span style="position:absolute;top:303px;line-height:20px;font-size:9.5px;color:rgba(0,0,0,0.3);white-space:nowrap;font-weight:bold;left:177.80px;transform-origin:0 50%;transform:scaleX(0.9990);">×</span>
<div style="position:absolute;left:10px;top:351.7px;width:179px;height:37px;background:#f39c12;border-radius:1px"></div>
<svg style="left:18.6px;top:362.3px" width="6" height="6" viewBox="0 0 12 12"><circle cx="6" cy="6" r="6" fill="#fff"/><rect x="5" y="2.2" width="2" height="4.6" fill="#f39c12"/><rect x="5" y="7.8" width="2" height="2" fill="#f39c12"/></svg>
<span style="position:absolute;top:356px;line-height:20px;font-size:7.2px;color:#fff;white-space:nowrap;left:27.00px;transform-origin:0 50%;transform:scaleX(0.9272);-webkit-text-stroke:0.2px #fff;">Se acerca fin de Contrato</span>
<span style="position:absolute;top:366px;line-height:20px;font-size:7px;color:#fff;white-space:nowrap;left:18.40px;transform-origin:0 50%;transform:scaleX(0.9424);-webkit-text-stroke:0.2px #fff;">No. SI 2017-003 vence el 28/05/2017</span>
<span style="position:absolute;top:351px;line-height:20px;font-size:9.5px;color:rgba(0,0,0,0.3);white-space:nowrap;font-weight:bold;left:177.80px;transform-origin:0 50%;transform:scaleX(0.9990);">×</span>
</body></html>
